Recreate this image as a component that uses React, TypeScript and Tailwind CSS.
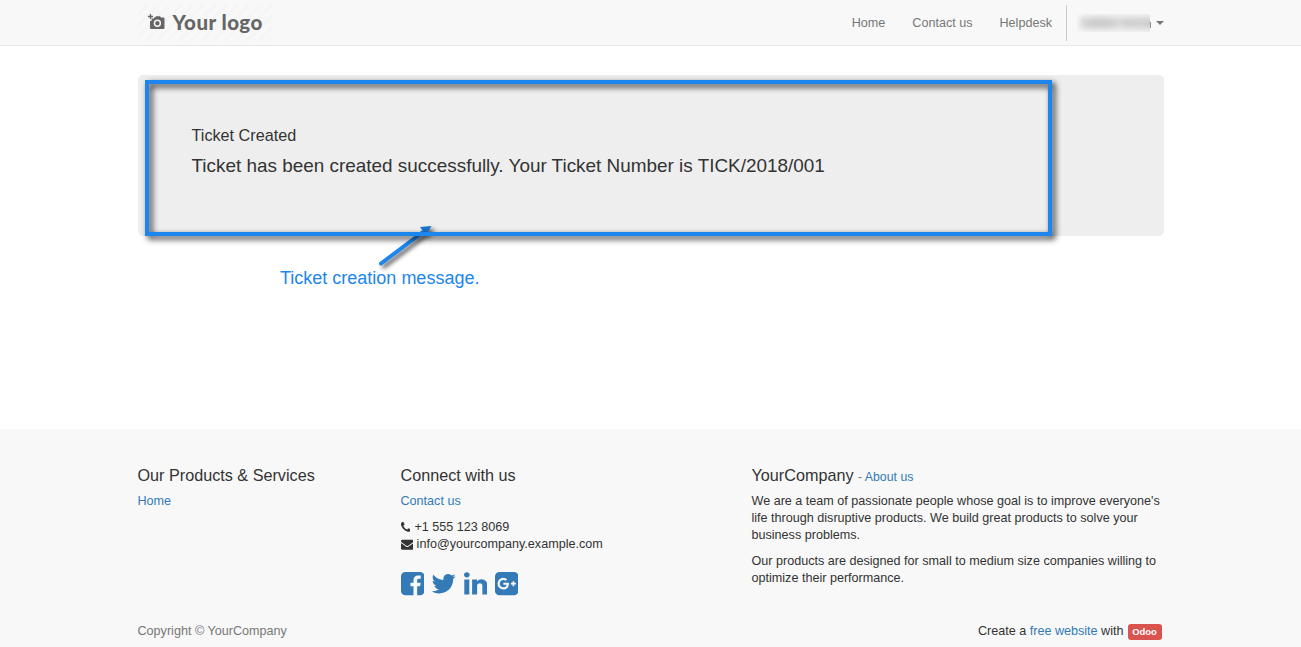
import type { ReactNode } from "react";

type GlyphProps = { width: number; d: string; className?: string };

function Glyph({ width, d, className }: GlyphProps) {
  return (
    <svg viewBox={`0 0 ${width} 1792`} className={className} fill="currentColor" aria-hidden="true">
      <path transform="matrix(1 0 0 -1 0 1536)" d={d} />
    </svg>
  );
}

const PHONE =
  "M1408 296q0 -27 -10 -70.5t-21 -68.5q-21 -50 -122 -106q-94 -51 -186 -51q-27 0 -53 3.5t-57.5 12.5t-47 14.5t-55.5 20.5t-49 18q-98 35 -175 83q-127 79 -264 216t-216 264q-48 77 -83 175q-3 9 -18 49t-20.5 55.5t-14.5 47t-12.5 57.5t-3.5 53q0 92 51 186q56 101 106 122q25 11 68.5 21t70.5 10q14 0 21 -3q18 -6 53 -76q11 -19 30 -54t35 -63.5t31 -53.5q3 -4 17.5 -25t21.5 -35.5t7 -28.5q0 -20 -28.5 -50t-62 -55t-62 -53t-28.5 -46q0 -9 5 -22.5t8.5 -20.5t14 -24t11.5 -19q76 -137 174 -235t235 -174q2 -1 19 -11.5t24 -14t20.5 -8.5t22.5 -5q18 0 46 28.5t53 62t55 62t50 28.5q14 0 28.5 -7t35.5 -21.5t25 -17.5q25 -15 53.5 -31t63.5 -35t54 -30q70 -35 76 -53q3 -7 3 -21z";
const ENVELOPE =
  "M1792 826v-794q0 -66 -47 -113t-113 -47h-1472q-66 0 -113 47t-47 113v794q44 -49 101 -87q362 -246 497 -345q57 -42 92.5 -65.5t94.5 -48t110 -24.5h1h1q51 0 110 24.5t94.5 48t92.5 65.5q170 123 498 345q57 39 100 87zM1792 1120q0 -79 -49 -151t-122 -123q-376 -261 -468 -325q-10 -7 -42.5 -31t-54 -38.5t-52 -32.5t-57.5 -27t-50 -9h-1h-1q-23 0 -50 9t-57.5 27t-52 32.5t-54 38.5t-42.5 31q-91 64 -262 182.5t-205 142.5q-62 42 -117 115.5t-55 136.5q0 78 41.5 130t118.5 52h1472q65 0 112.5 -47t47.5 -113z";
const FACEBOOK =
  "M1248 1408q119 0 203.5 -84.5t84.5 -203.5v-960q0 -119 -84.5 -203.5t-203.5 -84.5h-188v595h199l30 232h-229v148q0 56 23.5 84t91.5 28l122 1v207q-63 9 -178 9q-136 0 -217.5 -80t-81.5 -226v-171h-200v-232h200v-595h-532q-119 0 -203.5 84.5t-84.5 203.5v960q0 119 84.5 203.5t203.5 84.5h960z";
const TWITTER =
  "M1620 1128q-67 -98 -162 -167q1 -14 1 -42q0 -130 -38 -259.5t-115.5 -248.5t-184.5 -210.5t-258 -146t-323 -54.5q-271 0 -496 145q35 -4 78 -4q225 0 401 138q-105 2 -188 64.5t-114 159.5q33 -5 61 -5q43 0 85 11q-112 23 -185.5 111.5t-73.5 205.5v4q68 -38 146 -41q-66 44 -105 115t-39 154q0 88 44 163q121 -149 294.5 -238.5t371.5 -99.5q-8 38 -8 74q0 134 94.5 228.5t228.5 94.5q140 0 236 -102q109 21 205 78q-37 -115 -142 -178q93 10 186 50z";
const LINKEDIN =
  "M349 911v-991h-330v991h330zM370 1217q1 -73 -50.5 -122t-135.5 -49h-2q-82 0 -132 49t-50 122q0 74 51.5 122.5t134.5 48.5t133 -48.5t51 -122.5zM1536 488v-568h-329v530q0 105 -40.5 164.5t-126.5 59.5q-63 0 -105.5 -34.5t-63.5 -85.5q-11 -30 -11 -81v-553h-329q2 399 2 647t-1 296l-1 48h329v-144h-2q20 32 41 56t56.5 52t87 43.5t114.5 15.5q171 0 275 -113.5t104 -332.5z";
const GOOGLE_PLUS =
  "M917 631q0 26 -6 64h-362v-132h217q-3 -24 -16.5 -50t-37.5 -53t-66.5 -44.5t-96.5 -17.5q-99 0 -169 71t-70 171t70 171t169 71q92 0 153 -59l104 101q-108 100 -257 100q-160 0 -272 -112.5t-112 -271.5t112 -271.5t272 -112.5q165 0 266.5 105t101.5 270zM1262 585h109v110h-109v110h-110v-110h-110v-110h110v-110h110v110zM1536 1120v-960q0 -119 -84.5 -203.5t-203.5 -84.5h-960q-119 0 -203.5 84.5t-84.5 203.5v960q0 119 84.5 203.5t203.5 84.5h960q119 0 203.5 -84.5t84.5 -203.5z";

function Link({ children }: { children: ReactNode }) {
  return (
    <a href="#" className="text-[#337ab7]">
      {children}
    </a>
  );
}

function Logo() {
  return (
    <a
      href="#"
      className="mt-[5px] flex h-9 w-[134px] items-center bg-[repeating-linear-gradient(135deg,#f8f8f8_0px,#f8f8f8_5px,#f5f5f5_5px,#f5f5f5_8px)] pl-[10px] text-[#666]"
    >
      <svg viewBox="0 0 17 16" className="mb-[3px] h-4 w-[17px]" aria-hidden="true">
        <path
          fill="currentColor"
          fillRule="evenodd"
          d="M2 7h1.500V4.500H6V3.500h1L8 2.300h4l1 1.200h2.500q1 0 1 1V14q0 1-1 1H3q-1 0-1-1zM9.400 5.500a3.700 3.700 0 1 0 0 7.400 3.700 3.700 0 0 0 0-7.400zm0 1.500a2.200 2.200 0 1 1 0 4.400 2.200 2.200 0 0 1 0-4.400z"
        />
        <path d="M2.500 0v5M0 2.500h5" stroke="currentColor" strokeWidth="1.300" />
      </svg>
      <span className="mb-px ml-[8px] font-['Lato',sans-serif] text-[20.500px] leading-none font-black tracking-[0.450px] whitespace-nowrap">
        Your logo
      </span>
    </a>
  );
}

function Header() {
  return (
    <header className="h-[46px] border-b border-[#e7e7e7] bg-[#f8f8f8]">
      <div className="mx-auto flex w-[1026px] justify-between">
        <Logo />
        <nav className="mt-[5px] flex h-9 items-center text-[#777]">
          <a href="#">Home</a>
          <a href="#" className="ml-[27px]">Contact us</a>
          <a href="#" className="ml-[27px]">Helpdesk</a>
          <div className="ml-[13.500px] flex h-9 items-center border-l border-[#ccc] pl-[10px]">
            <span className="block h-[18px] w-[73px] overflow-hidden">
              <span className="mt-[3px] ml-[3px] block h-[12px] w-[80px] bg-[linear-gradient(90deg,#d8d8d8_0%,#c9c9c9_20%,#cecece_42%,#dcdcdc_49%,#cdcdcd_58%,#d1d1d1_75%,#c4c4c4_100%)] blur-[3px]" />
            </span>
            <span className="mt-[3px] h-[6px] w-px bg-[#8b929b]" />
            <span className="ml-[5px] border-x-4 border-t-4 border-x-transparent border-t-[#777]" />
          </div>
        </nav>
      </div>
    </header>
  );
}

function Callout() {
  return (
    <>
      <svg
        viewBox="0 0 70 50"
        className="absolute top-[147px] left-[232.500px] h-[50px] w-[70px] [filter:drop-shadow(3px_3px_2px_rgba(0,0,0,0.65))]"
        aria-hidden="true"
      >
        <path d="M11 41.500L53 10" stroke="#1c86ee" strokeWidth="4" strokeLinecap="round" />
        <path d="M50 5L61.500 4L56 13z" fill="#1873cc" />
      </svg>
      <div className="absolute top-[5px] left-[7.500px] h-[156px] w-[907px] border-4 border-[#1c86ee] [filter:drop-shadow(3px_3px_3px_rgba(0,0,0,0.85))]" />
      <p className="absolute top-[192px] left-[142.500px] text-[18px] leading-[22px] whitespace-nowrap text-[#1c86ee]">
        Ticket creation message.
      </p>
    </>
  );
}

function Footer() {
  return (
    <footer className="flex-1 bg-[#f8f8f8]">
      <div className="mx-auto w-[1026px] pt-[37px]">
        <div className="flex h-[157px]">
          <section className="w-[263px]">
            <h4 className="mb-[9px] text-[16.200px] leading-[18px]">Our Products &amp; Services</h4>
            <Link>Home</Link>
          </section>
          <section className="w-[351px]">
            <h4 className="mb-[9px] text-[16.200px] leading-[18px]">Connect with us</h4>
            <p className="mb-[9px]"><Link>Contact us</Link></p>
            <p className="flex items-center">
              <Glyph width={1408} d={PHONE} className="mr-1 h-[12.600px] w-[9.900px]" />
              +1 555 123 8069
            </p>
            <p className="flex items-center">
              <Glyph width={1792} d={ENVELOPE} className="mr-[3.500px] h-[12.600px] w-[12.600px]" />
              info@yourcompany.example.com
            </p>
            <div className="mt-[17px] flex gap-[7.400px] text-[#337ab7]">
              <Glyph width={1536} d={FACEBOOK} className="h-[27.300px] w-[23.400px]" />
              <Glyph width={1664} d={TWITTER} className="h-[27.300px] w-[25.300px]" />
              <Glyph width={1536} d={LINKEDIN} className="h-[27.300px] w-[23.400px]" />
              <Glyph width={1536} d={GOOGLE_PLUS} className="h-[27.300px] w-[23.400px]" />
            </div>
          </section>
          <section className="w-[412px]">
            <h4 className="mb-[9px] h-[18px] text-[16.200px] leading-[18px]">
              YourCompany <small className="text-[12.300px] text-[#777]">- <Link>About us</Link></small>
            </h4>
            <p className="mb-[9px]">
              We are a team of passionate people whose goal is to improve everyone&apos;s life through
              disruptive products. We build great products to solve your business problems.
            </p>
            <p>
              Our products are designed for small to medium size companies willing to optimize their
              performance.
            </p>
          </section>
        </div>
        <div className="flex items-center justify-between">
          <span className="text-[#777]">Copyright © YourCompany</span>
          <span className="flex items-center gap-1 pr-[2px]">
            <span>Create a <Link>free website</Link> with</span>
            <span className="mt-px h-4 w-[34px] rounded-[3px] bg-[#d9534f] text-center text-[9.450px] leading-[16px] font-bold text-white">
              Odoo
            </span>
          </span>
        </div>
      </div>
    </footer>
  );
}

export default function App() {
  return (
    <div className="flex h-[647px] flex-col overflow-hidden bg-white font-['Liberation_Sans',Arial,sans-serif] text-[12.600px] leading-[17px] text-[#333]">
      <Header />
      <main className="h-[383px] pt-[29px]">
        <div className="relative mx-auto h-[161px] w-[1026px] rounded-[5px] bg-[#eee] pt-[51px] pl-[54px]">
          <h1 className="text-[16.200px] leading-[18px]">Ticket Created</h1>
          <p className="mt-[10px] text-[18.920px] leading-[24px]">
            Ticket has been created successfully. Your Ticket Number is TICK/2018/001
          </p>
          <Callout />
        </div>
      </main>
      <Footer />
    </div>
  );
}
